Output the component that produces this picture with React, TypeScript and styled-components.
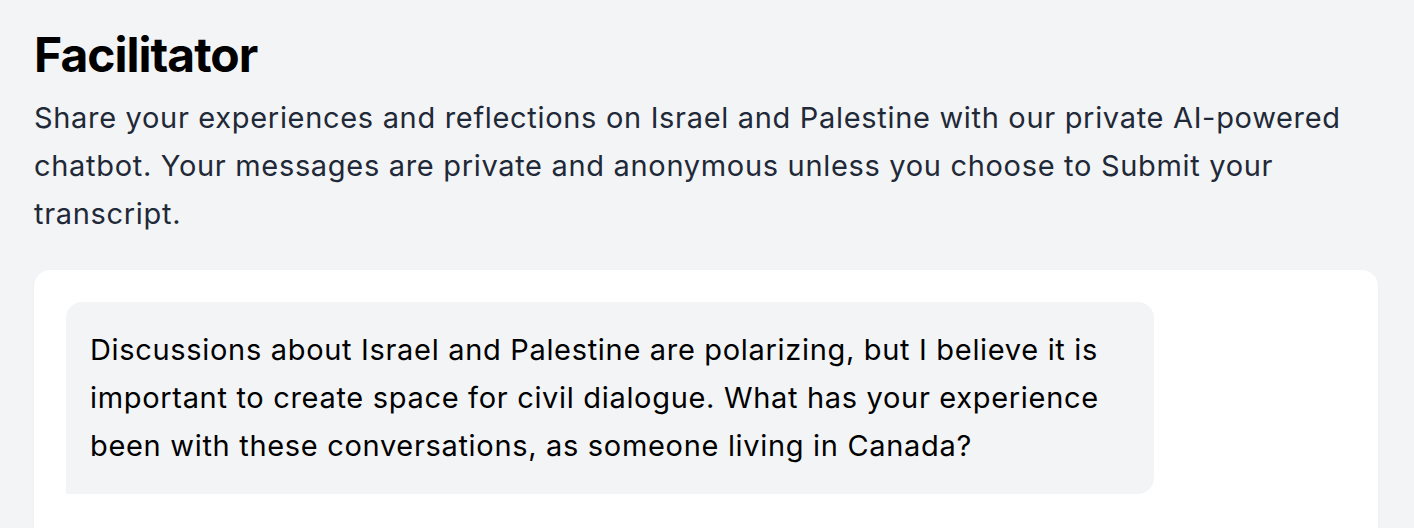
import React from "react";
import styled, { createGlobalStyle } from "styled-components";

const Global = createGlobalStyle`
  html, body {
    margin: 0;
    padding: 0;
    background: #f3f4f6;
    font-family: Inter, "Noto Sans", Arial, sans-serif;
    -webkit-font-smoothing: antialiased;
  }
  * { box-sizing: border-box; }
`;

const Page = styled.main`
  padding: 26px 36px 0 34px;
`;

const Title = styled.h1`
  margin: 0 0 10px;
  font-size: 48px;
  line-height: 58px;
  font-weight: 700;
  color: #000;
  letter-spacing: -1px;
`;

const Intro = styled.p`
  margin: 0 0 32px;
  font-size: 29px;
  line-height: 48px;
  letter-spacing: 0.68px;
  color: #1f2937;
`;

const ChatCard = styled.section`
  background: #fff;
  border-radius: 16px 16px 0 0;
  padding: 32px;
  min-height: 258px;
  box-shadow: 0 1px 3px rgba(0, 0, 0, 0.04);
`;

const Bubble = styled.div<{ $from: "bot" | "user" }>`
  max-width: 85%;
  background: ${(p) => (p.$from === "bot" ? "#f3f4f6" : "#e5e7eb")};
  border-radius: ${(p) => (p.$from === "bot" ? "16px 16px 16px 0" : "16px 16px 0 16px")};
  padding: 24px;
  font-size: 29px;
  line-height: 48px;
  letter-spacing: 0.68px;
  color: #000;
`;

export default function App() {
  return (
    <>
      <Global />
      <Page>
        <Title>Facilitator</Title>
        <Intro>
          Share your experiences and reflections on Israel and Palestine with our private
          AI-powered chatbot. Your messages are private and anonymous unless you choose to
          Submit your transcript.
        </Intro>
        <ChatCard>
          <Bubble $from="bot">
            Discussions about Israel and Palestine are polarizing, but I believe it is
            important to create space for civil dialogue. What has your experience been with
            these conversations, as someone living in Canada?
          </Bubble>
        </ChatCard>
      </Page>
    </>
  );
}
